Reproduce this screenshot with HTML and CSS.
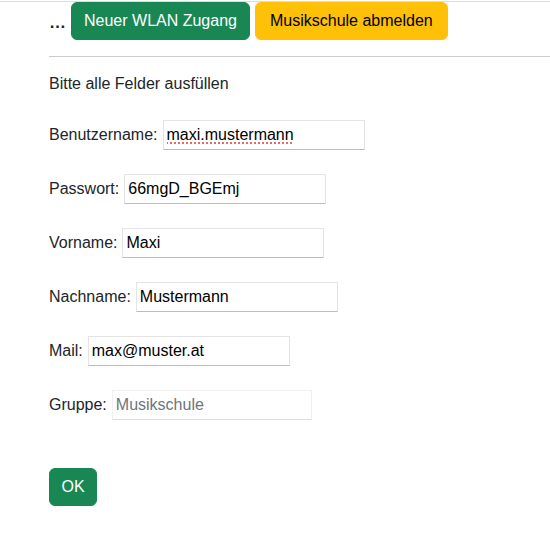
FILE: index.html
```html
<!DOCTYPE html>
<html lang="de">
<head>
<meta charset="utf-8">
<title>WLAN Zugang</title>
<link rel="stylesheet" href="styles.css">
</head>
<body>
<div class="topline"></div>
<div class="page">
  <div class="toolbar">
    <span class="dots">…</span>
    <button class="btn btn-green" type="button">Neuer WLAN Zugang</button>
    <button class="btn btn-yellow" type="button">Musikschule abmelden</button>
  </div>
  <hr class="sep">
  <p class="intro">Bitte alle Felder ausfüllen</p>
  <form class="form">
    <div class="row"><label for="u">Benutzername:</label><input id="u" class="field spell" type="text" value="maxi.mustermann"></div>
    <div class="row"><label for="p">Passwort:</label><input id="p" class="field" type="text" value="66mgD_BGEmj"></div>
    <div class="row"><label for="v">Vorname:</label><input id="v" class="field" type="text" value="Maxi"></div>
    <div class="row"><label for="n">Nachname:</label><input id="n" class="field" type="text" value="Mustermann"></div>
    <div class="row"><label for="m">Mail:</label><input id="m" class="field" type="text" value="max@muster.at"></div>
    <div class="row"><label for="g">Gruppe:</label><input id="g" class="field field-ro" type="text" placeholder="Musikschule" readonly></div>
    <button class="btn btn-green btn-ok" type="button">OK</button>
  </form>
</div>
</body>
</html>
```
FILE: styles.css
```css
html, body {
  margin: 0;
  padding: 0;
  background: #fff;
}
body {
  font-family: "Liberation Sans", Arial, sans-serif;
  font-size: 16px;
  line-height: 24px;
  color: #212529;
}
.topline {
  margin-top: 1px;
  height: 1px;
  background: #dcdcdc;
}
.page {
  padding-left: 49px;
}
.toolbar {
  display: flex;
  align-items: center;
  height: 38px;
}
.dots {
  font-weight: bold;
  font-size: 17px;
  line-height: 24px;
  padding-top: 4px;
  color: #212529;
  margin-right: 5px;
}
.btn {
  font-family: "Liberation Sans", Arial, sans-serif;
  font-size: 16px;
  line-height: 24px;
  padding: 6px 12px;
  border: 1px solid transparent;
  border-radius: 6px;
  height: 38px;
  box-sizing: border-box;
  cursor: pointer;
}
.btn-green {
  background: #198754;
  border-color: #198754;
  color: #fff;
}
.btn-yellow {
  background: #ffc107;
  border-color: #ffc107;
  color: #000;
  margin-left: 5px;
  padding: 6px 14px;
}
.sep {
  margin: 16px 0 0 0;
  border: 0;
  border-top: 1px solid #cbcbcb;
  height: 0;
}
.intro {
  margin: 15px 0 0 0;
}
.form {
  display: flex;
  flex-direction: column;
  align-items: flex-start;
  margin-top: 24px;
  gap: 24px;
}
.row {
  display: flex;
  align-items: center;
  gap: 5px;
  height: 30px;
}
.field {
  width: 202px;
  height: 30px;
  box-sizing: border-box;
  padding: 0 3px;
  font-family: "Liberation Sans", Arial, sans-serif;
  font-size: 16px;
  color: #000;
  background: #fff;
  border: 1px solid #e4e4e4;
  border-bottom-color: #bdbdbd;
  border-radius: 0;
  outline: none;
}
.spell {
  text-decoration: underline dotted #e0453c;
  text-underline-offset: 3px;
}
.field-ro {
  width: 200px;
  border-color: #f0f0f0;
  border-bottom-color: #dddddd;
}
.field-ro::placeholder {
  color: #6c757d;
  opacity: 1;
}
.btn-ok {
  margin-top: 24px;
  width: 48px;
  padding: 6px 0;
}
```
